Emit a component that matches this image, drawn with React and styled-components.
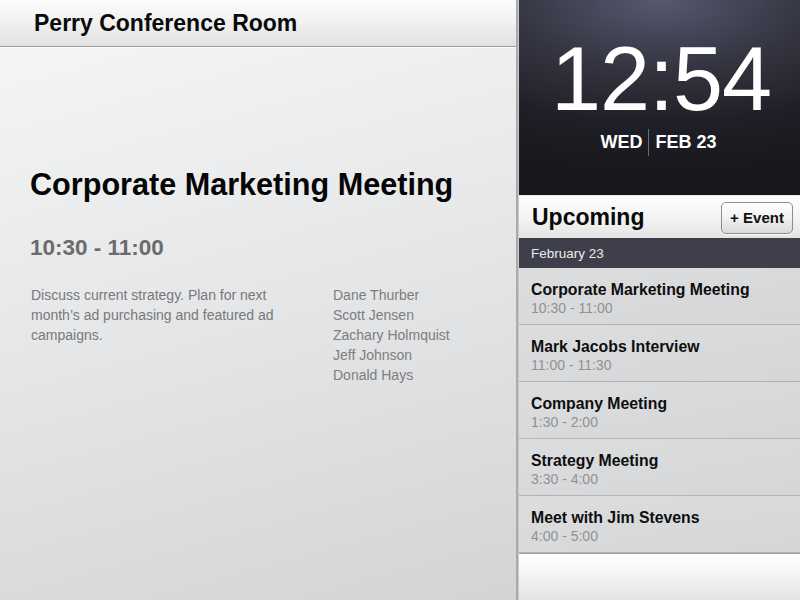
import React from "react";
import styled, { createGlobalStyle } from "styled-components";

const Global = createGlobalStyle`
  html, body { margin: 0; padding: 0; }
  body {
    width: 800px;
    height: 600px;
    overflow: hidden;
    font-family: "Liberation Sans", Arial, Helvetica, sans-serif;
    -webkit-font-smoothing: antialiased;
  }
  * { box-sizing: border-box; }
`;

const Screen = styled.div`
  display: flex;
  width: 800px;
  height: 600px;
`;

const LeftPane = styled.section`
  width: 518px;
  height: 600px;
  display: flex;
  flex-direction: column;
  border-right: 2px solid #a9aaac;
  background: linear-gradient(165deg, #f6f7f7 0%, #e7e8e9 45%, #d3d4d6 100%);
`;

const RoomBar = styled.header`
  height: 47px;
  flex: none;
  display: flex;
  align-items: center;
  padding: 0 34px;
  background: linear-gradient(180deg, #fcfcfc 0%, #f0f0f0 50%, #e1e1e1 100%);
  border-bottom: 1px solid #9c9c9c;
  box-shadow: 0 1px 0 #fbfbfb;
`;

const RoomTitle = styled.h1`
  margin: 0;
  font-size: 23px;
  line-height: 27px;
  font-weight: 700;
  color: #0a0a0a;
`;

const Detail = styled.div`
  padding: 119px 30px 0 30px;
  display: flex;
  flex-direction: column;
`;

const MeetingTitle = styled.h2`
  margin: 0;
  font-size: 30.6px;
  line-height: 36px;
  font-weight: 700;
  color: #050505;
`;

const MeetingTime = styled.div`
  margin-top: 32px;
  font-size: 22.5px;
  line-height: 27px;
  font-weight: 700;
  color: #6b6c6d;
`;

const InfoRow = styled.div`
  margin-top: 24px;
  display: flex;
  padding-left: 1px;
`;

const Description = styled.p`
  margin: 0;
  flex: none;
  width: 302px;
  padding-right: 34px;
  font-size: 14px;
  line-height: 20px;
  color: #77787a;
`;

const Attendees = styled.ul`
  list-style: none;
  margin: 0;
  padding: 0;
  font-size: 14px;
  line-height: 20px;
  color: #7d7e80;
`;

const RightPane = styled.aside`
  width: 282px;
  height: 600px;
  display: flex;
  flex-direction: column;
  border-left: 1px solid #c9cacc;
  background: #d7d8da;
`;

const ClockPanel = styled.div`
  height: 195px;
  flex: none;
  display: flex;
  flex-direction: column;
  align-items: center;
  padding-top: 34px;
  background:
    radial-gradient(ellipse 140% 90% at 50% 0%, #565870 0%, #33343f 40%, #1f2027 70%, #17171c 100%);
  color: #fff;
`;

const ClockTime = styled.div`
  font-size: 90px;
  line-height: 90px;
  font-weight: 400;
  letter-spacing: -1px;
  padding-left: 3px;
`;

const DateRow = styled.div`
  margin-top: 5px;
  display: flex;
  align-items: center;
  height: 27px;
  font-size: 18px;
  font-weight: 700;
  padding-right: 2px;
`;

const DatePart = styled.span`
  line-height: 27px;
  padding: 0 6px;
  border-left: ${(p) => (p.$divided ? "1px solid #6b6c75" : "none")};
`;

const UpcomingBar = styled.div`
  height: 43px;
  flex: none;
  display: flex;
  align-items: center;
  justify-content: space-between;
  padding: 0 7px 0 13px;
  background: linear-gradient(180deg, #ffffff 0%, #f3f3f3 55%, #e4e4e4 100%);
  border-top: 1px solid #e8e8e8;
`;

const UpcomingTitle = styled.h2`
  margin: 0;
  font-size: 23px;
  line-height: 27px;
  font-weight: 700;
  color: #0a0a0a;
`;

const AddButton = styled.button`
  width: 72px;
  height: 32px;
  margin-top: 1px;
  border: 1px solid #8d8e90;
  border-radius: 5px;
  background: linear-gradient(180deg, #ffffff 0%, #f1f1f1 50%, #d9d9d9 100%);
  box-shadow: 0 1px 0 #fafafa, inset 0 1px 0 #ffffff;
  font-family: inherit;
  font-size: 15px;
  font-weight: 700;
  color: #111;
  padding: 0;
`;

const DateHeader = styled.div`
  height: 30px;
  flex: none;
  display: flex;
  align-items: center;
  padding-left: 12px;
  background: #3e3f4a;
  color: #ececee;
  font-size: 13.5px;
`;

const EventList = styled.ul`
  list-style: none;
  margin: 0;
  padding: 0;
  flex: none;
`;

const EventItem = styled.li`
  height: 57px;
  padding: 12px 0 0 12px;
  background: linear-gradient(170deg, #dcdddf 0%, #d5d6d8 100%);
  border-bottom: 1px solid #b2b3b5;
`;

const EventName = styled.div`
  font-size: 15.8px;
  line-height: 19px;
  font-weight: 700;
  color: #0e0e0e;
`;

const EventTime = styled.div`
  margin-top: 1px;
  font-size: 14px;
  line-height: 17px;
  color: #909193;
`;

const Footer = styled.div`
  flex: 1;
  border-top: 1px solid #a3a4a6;
  background: linear-gradient(180deg, #ffffff 0%, #f4f4f4 45%, #e3e3e3 100%);
`;

const events = [
  { name: "Corporate Marketing Meeting", time: "10:30 - 11:00" },
  { name: "Mark Jacobs Interview", time: "11:00 - 11:30" },
  { name: "Company Meeting", time: "1:30 - 2:00" },
  { name: "Strategy Meeting", time: "3:30 - 4:00" },
  { name: "Meet with Jim Stevens", time: "4:00 - 5:00" },
];

const people = [
  "Dane Thurber",
  "Scott Jensen",
  "Zachary Holmquist",
  "Jeff Johnson",
  "Donald Hays",
];

export default function App() {
  return (
    <>
      <Global />
      <Screen>
        <LeftPane>
          <RoomBar>
            <RoomTitle>Perry Conference Room</RoomTitle>
          </RoomBar>
          <Detail>
            <MeetingTitle>Corporate Marketing Meeting</MeetingTitle>
            <MeetingTime>10:30 - 11:00</MeetingTime>
            <InfoRow>
              <Description>
                Discuss current strategy. Plan for next month’s ad purchasing
                and featured ad campaigns.
              </Description>
              <Attendees>
                {people.map((p) => (
                  <li key={p}>{p}</li>
                ))}
              </Attendees>
            </InfoRow>
          </Detail>
        </LeftPane>
        <RightPane>
          <ClockPanel>
            <ClockTime>12:54</ClockTime>
            <DateRow>
              <DatePart>WED</DatePart>
              <DatePart $divided>FEB 23</DatePart>
            </DateRow>
          </ClockPanel>
          <UpcomingBar>
            <UpcomingTitle>Upcoming</UpcomingTitle>
            <AddButton>+ Event</AddButton>
          </UpcomingBar>
          <DateHeader>February 23</DateHeader>
          <EventList>
            {events.map((e) => (
              <EventItem key={e.name}>
                <EventName>{e.name}</EventName>
                <EventTime>{e.time}</EventTime>
              </EventItem>
            ))}
          </EventList>
          <Footer />
        </RightPane>
      </Screen>
    </>
  );
}
